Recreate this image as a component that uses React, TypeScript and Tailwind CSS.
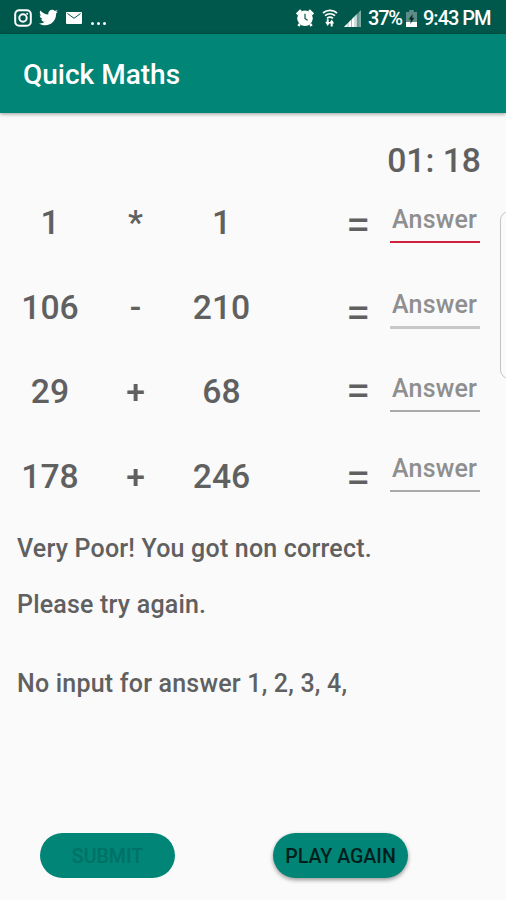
import { FaTwitter } from 'react-icons/fa'

const questions = [
    { left: '1', op: '*', right: '1', equals: 'mt-[15px]', field: 'mt-[27px] h-[36px]', line: 'h-[2px] bg-[#d0213f]' },
    { left: '106', op: '-', right: '210', equals: 'mt-[18px]', field: 'mt-[27px] h-[37px]', line: 'h-[3px] bg-[#c8c8c8]' },
    { left: '29', op: '+', right: '68', equals: 'mt-[12px]', field: 'mt-[27px] h-[36px]', line: 'h-[2px] bg-[#a9a9a9]' },
    { left: '178', op: '+', right: '246', equals: 'mt-[14px]', field: 'mt-[22px] h-[36px]', line: 'h-[2px] bg-[#a9a9a9]' },
]

function InstagramIcon() {
    return (
        <svg className="h-[18px] w-[18px]" viewBox="0 0 18 18" fill="none" stroke="white" strokeWidth="2">
            <rect x="1.2" y="1.2" width="15.6" height="15.6" rx="4" />
            <circle cx="9" cy="9" r="3.7" />
            <circle cx="13.2" cy="4.8" r="1" fill="white" stroke="none" />
        </svg>
    )
}

function MailIcon() {
    return (
        <svg className="h-[12px] w-[16px]" viewBox="0 0 16 12">
            <rect width="16" height="12" rx="1" fill="white" />
            <path d="M1.5 1.5 8 6.3 14.5 1.5" fill="none" stroke="#00574b" strokeWidth="1" />
        </svg>
    )
}

function AlarmIcon() {
    return (
        <svg className="h-[18px] w-[18px]" viewBox="0 0 18 18">
            <path d="M.8 5.4 5 1.2M17.2 5.4 13 1.2M3.8 15 2.4 17M14.2 15l1.4 2" stroke="white" strokeWidth="2.6" />
            <circle cx="9" cy="9.2" r="7.8" fill="white" />
            <path d="M9 4.8v4.6l2.6 1.8" fill="none" stroke="#00574b" strokeWidth="1.2" />
        </svg>
    )
}

function WifiIcon() {
    return (
        <svg className="h-[18px] w-[16px]" viewBox="0 0 16 18" fill="none" stroke="white">
            <path d="M1 4C5 .4 11 .4 15 4M3 6.7c3-2.6 7-2.6 10 0M5 9.3c1.8-1.4 4.2-1.4 6 0" strokeWidth="1.7" />
            <path d="M3.2 13h5l-2.5 4zM7.2 14.6h5l-2.5-4z" fill="white" stroke="none" />
            <path d="M5.7 10.2V14M9.7 13.6v3.8" strokeWidth="2" />
        </svg>
    )
}

function SignalIcon() {
    return (
        <svg className="h-[17px] w-[17px]" viewBox="0 0 17 17">
            <path d="M0 17 17 0v17z" fill="#7fa9a3" />
            <path d="M0 17 12.5 4.5V17z" fill="white" />
            <path d="M4 12v5M7.5 8v9M11 5v12M14 2v15" stroke="#00574b" strokeWidth=".4" />
        </svg>
    )
}

function BatteryIcon() {
    return (
        <svg className="h-[17px] w-[11px]" viewBox="0 0 11 17">
            <path d="M3.2 0h4.6v2H11v15H0V2h3.2z" fill="#5d8d86" />
            <path d="M0 12h11v5H0z" fill="white" />
            <path d="M6.6 4 2.6 9.4h2.2L4.4 14l4-6.2H6.2z" fill="#002f28" />
        </svg>
    )
}

function StatusBar() {
    return (
        <div className="flex h-[34px] items-center bg-[#00574b] text-white">
            <div className="ml-[14px] flex items-center pt-px">
                <InstagramIcon />
                <FaTwitter className="ml-[7px] h-[19px] w-[19px]" />
                <span className="ml-[8px]"><MailIcon /></span>
                <span className="ml-[9px] flex gap-[3px] pt-[12px]">
                    <i className="size-[3px] rounded-full bg-white" />
                    <i className="size-[3px] rounded-full bg-white" />
                    <i className="size-[3px] rounded-full bg-white" />
                </span>
            </div>
            <div className="mr-[15px] ml-auto flex items-center pt-[2px]">
                <AlarmIcon />
                <span className="ml-[8px]"><WifiIcon /></span>
                <span className="ml-[6px]"><SignalIcon /></span>
                <span className="ml-[7px] w-[34px] text-[20px] leading-none tracking-[-1.2px]">37%</span>
                <span className="ml-[4px]"><BatteryIcon /></span>
                <span className="ml-[6px] w-[68px] text-[20px] leading-none tracking-[-1px] whitespace-nowrap">9:43 PM</span>
            </div>
        </div>
    )
}

export default function App() {
    return (
        <div className="relative flex h-[900px] w-[506px] flex-col overflow-hidden bg-[#fafafa] font-['Roboto',sans-serif] font-medium text-[#606060]">
            <StatusBar />
            <header className="flex h-[79px] items-center bg-[#008577] pl-[23px] shadow-[0_1px_4px_rgba(0,0,0,0.4)]">
                <h1 className="pt-[3px] text-[28px] leading-none text-white">Quick Maths</h1>
            </header>

            <div className="flex h-[67px] items-center justify-end pt-[28px] pr-[25px] text-[33.7px] leading-none">01: 18</div>

            {questions.map((q, i) => (
                <div key={i} className="flex h-[84.5px] text-[33.7px] leading-[86.5px]">
                    <span className="w-[100px] text-center">{q.left}</span>
                    <span className="w-[71px] text-center">{q.op}</span>
                    <span className="w-[101px] text-center">{q.right}</span>
                    <span className={`ml-[66px] w-[40px] text-center text-[44px] leading-[60px] font-normal ${q.equals}`}>=</span>
                    <div className={`ml-[12px] flex w-[90px] flex-col justify-between ${q.field}`}>
                        <span className="pl-[2px] text-[25px] leading-[25px] tracking-[0.2px] text-[#8f8f8f]">Answer</span>
                        <i className={q.line} />
                    </div>
                </div>
            ))}

            <div className="pl-[17px] text-[25px] leading-[30px] tracking-[0.2px]">
                <p className="mt-[16px]">Very Poor! You got non correct.</p>
                <p className="mt-[26px]">Please try again.</p>
                <p className="mt-[49px]">No input for answer 1, 2, 3, 4,</p>
            </div>

            <div className="mt-auto mb-[22px] flex pl-[40px] text-[19.6px]">
                <button className="h-[45px] w-[135px] rounded-full bg-[#008577] pt-[3px] text-[#007165]">SUBMIT</button>
                <button className="ml-[98px] h-[45px] w-[135px] rounded-full bg-[#008577] pt-[3px] whitespace-nowrap text-[#001f1c] shadow-[0_2px_4px_rgba(0,0,0,0.4)]">PLAY AGAIN</button>
            </div>

            {/* edge panel handle */}
            <div className="absolute top-[211px] left-[500px] h-[168px] w-[20px] rounded-[9px] border border-[#c4c4c4] bg-[#fbfbfb]" />
        </div>
    )
}
